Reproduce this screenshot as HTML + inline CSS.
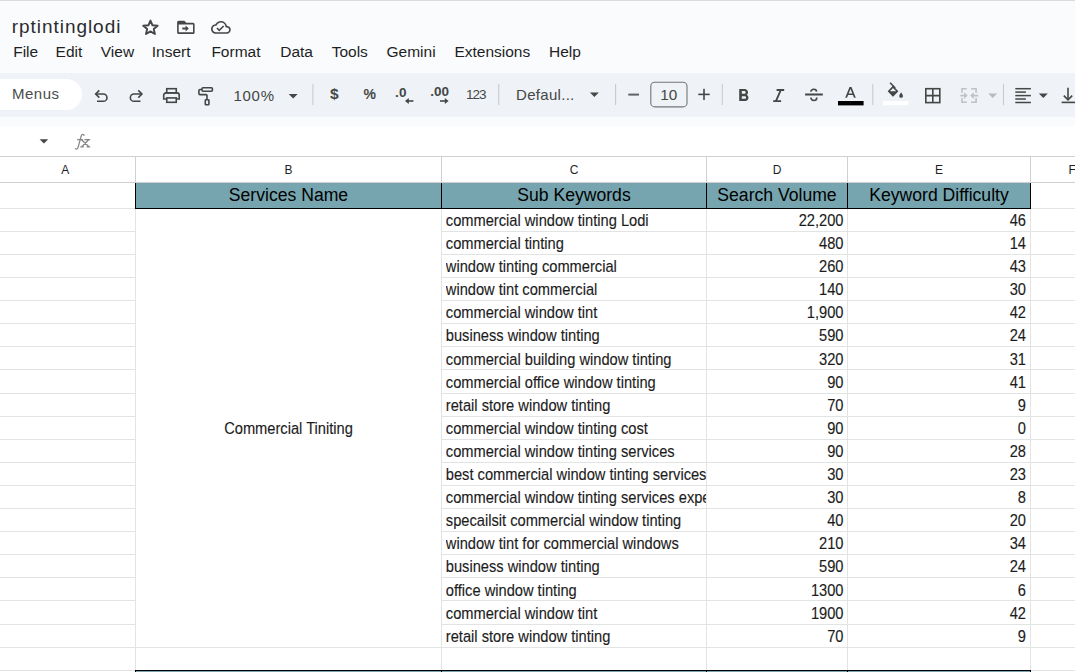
<!DOCTYPE html><html><head><meta charset='utf-8'><style>
*{margin:0;padding:0;box-sizing:border-box}
html,body{width:1075px;height:672px;overflow:hidden;background:#f9fbfd;font-family:"Liberation Sans",sans-serif;position:relative}
.a{position:absolute}
.t{position:absolute;white-space:nowrap}
.ico{position:absolute}
.dt{font-size:14.67px;line-height:18px;color:#1c1c1c;transform:scaleY(1.1);transform-origin:0 14px;-webkit-text-stroke:0.12px #1c1c1c}
</style></head><body>
<div class="a" style="left:0;top:0;width:1075px;height:1px;background:#dadcdb"></div>
<div class="t" style="left:11.8px;top:13.5px;font-size:19px;letter-spacing:0.95px;color:#2b2c2e;line-height:26px">rptintinglodi</div>
<div class="t" style="left:13.2px;top:43.1px;font-size:15.5px;color:#1f1f1f;line-height:18px">File</div>
<div class="t" style="left:55.6px;top:43.1px;font-size:15.5px;color:#1f1f1f;line-height:18px">Edit</div>
<div class="t" style="left:100.8px;top:43.1px;font-size:15.5px;color:#1f1f1f;line-height:18px">View</div>
<div class="t" style="left:151.8px;top:43.1px;font-size:15.5px;color:#1f1f1f;line-height:18px">Insert</div>
<div class="t" style="left:211.4px;top:43.1px;font-size:15.5px;color:#1f1f1f;line-height:18px">Format</div>
<div class="t" style="left:280.2px;top:43.1px;font-size:15.5px;color:#1f1f1f;line-height:18px">Data</div>
<div class="t" style="left:331.7px;top:43.1px;font-size:15.5px;color:#1f1f1f;line-height:18px">Tools</div>
<div class="t" style="left:386.5px;top:43.1px;font-size:15.5px;color:#1f1f1f;line-height:18px">Gemini</div>
<div class="t" style="left:454.4px;top:43.1px;font-size:15.5px;color:#1f1f1f;line-height:18px">Extensions</div>
<div class="t" style="left:549.0px;top:43.1px;font-size:15.5px;color:#1f1f1f;line-height:18px">Help</div>
<div class="a" style="left:0;top:72.5px;width:1075px;height:44.5px;background:#eff2f6"></div>
<div class="a" style="left:-30px;top:79px;width:112px;height:31px;background:#fff;border-radius:16px"></div>
<div class="t" style="left:12px;top:85.2px;font-size:15px;letter-spacing:0.5px;color:#4a4d4c;line-height:17px">Menus</div>
<div class="a" style="left:0;top:125.5px;width:1075px;height:31px;background:#fff"></div>
<div class="a" style="left:0;top:156px;width:1075px;height:516px;background:#fff"></div>
<div class="a" style="left:0;top:156px;width:1075px;height:1px;background:#d0d0d0"></div>
<div class="a" style="left:0;top:182px;width:1075px;height:1px;background:#d0d0d0"></div>
<div class="t" style="left:-5px;width:140.5px;text-align:center;top:162.7px;font-size:12px;line-height:14px;color:#1f1f1f">A</div>
<div class="t" style="left:135.5px;width:306.0px;text-align:center;top:162.7px;font-size:12px;line-height:14px;color:#1f1f1f">B</div>
<div class="a" style="left:135px;top:157px;width:1px;height:25px;background:#d0d0d0"></div>
<div class="t" style="left:441.5px;width:265.0px;text-align:center;top:162.7px;font-size:12px;line-height:14px;color:#1f1f1f">C</div>
<div class="a" style="left:441px;top:157px;width:1px;height:25px;background:#d0d0d0"></div>
<div class="t" style="left:706.5px;width:141.0px;text-align:center;top:162.7px;font-size:12px;line-height:14px;color:#1f1f1f">D</div>
<div class="a" style="left:706px;top:157px;width:1px;height:25px;background:#d0d0d0"></div>
<div class="t" style="left:847.5px;width:183.0px;text-align:center;top:162.7px;font-size:12px;line-height:14px;color:#1f1f1f">E</div>
<div class="a" style="left:847px;top:157px;width:1px;height:25px;background:#d0d0d0"></div>
<div class="t" style="left:1030.5px;width:83.5px;text-align:center;top:162.7px;font-size:12px;line-height:14px;color:#1f1f1f">F</div>
<div class="a" style="left:1030px;top:157px;width:1px;height:25px;background:#d0d0d0"></div>
<div class="a" style="left:0;top:208px;width:1075px;height:1px;background:#e2e3e3"></div>
<div class="a" style="left:0;top:231px;width:135px;height:1px;background:#e2e3e3"></div>
<div class="a" style="left:441px;top:231px;width:640px;height:1px;background:#e2e3e3"></div>
<div class="a" style="left:0;top:254px;width:135px;height:1px;background:#e2e3e3"></div>
<div class="a" style="left:441px;top:254px;width:640px;height:1px;background:#e2e3e3"></div>
<div class="a" style="left:0;top:277px;width:135px;height:1px;background:#e2e3e3"></div>
<div class="a" style="left:441px;top:277px;width:640px;height:1px;background:#e2e3e3"></div>
<div class="a" style="left:0;top:300px;width:135px;height:1px;background:#e2e3e3"></div>
<div class="a" style="left:441px;top:300px;width:640px;height:1px;background:#e2e3e3"></div>
<div class="a" style="left:0;top:323px;width:135px;height:1px;background:#e2e3e3"></div>
<div class="a" style="left:441px;top:323px;width:640px;height:1px;background:#e2e3e3"></div>
<div class="a" style="left:0;top:346px;width:135px;height:1px;background:#e2e3e3"></div>
<div class="a" style="left:441px;top:346px;width:640px;height:1px;background:#e2e3e3"></div>
<div class="a" style="left:0;top:369px;width:135px;height:1px;background:#e2e3e3"></div>
<div class="a" style="left:441px;top:369px;width:640px;height:1px;background:#e2e3e3"></div>
<div class="a" style="left:0;top:393px;width:135px;height:1px;background:#e2e3e3"></div>
<div class="a" style="left:441px;top:393px;width:640px;height:1px;background:#e2e3e3"></div>
<div class="a" style="left:0;top:416px;width:135px;height:1px;background:#e2e3e3"></div>
<div class="a" style="left:441px;top:416px;width:640px;height:1px;background:#e2e3e3"></div>
<div class="a" style="left:0;top:439px;width:135px;height:1px;background:#e2e3e3"></div>
<div class="a" style="left:441px;top:439px;width:640px;height:1px;background:#e2e3e3"></div>
<div class="a" style="left:0;top:462px;width:135px;height:1px;background:#e2e3e3"></div>
<div class="a" style="left:441px;top:462px;width:640px;height:1px;background:#e2e3e3"></div>
<div class="a" style="left:0;top:485px;width:135px;height:1px;background:#e2e3e3"></div>
<div class="a" style="left:441px;top:485px;width:640px;height:1px;background:#e2e3e3"></div>
<div class="a" style="left:0;top:508px;width:135px;height:1px;background:#e2e3e3"></div>
<div class="a" style="left:441px;top:508px;width:640px;height:1px;background:#e2e3e3"></div>
<div class="a" style="left:0;top:531px;width:135px;height:1px;background:#e2e3e3"></div>
<div class="a" style="left:441px;top:531px;width:640px;height:1px;background:#e2e3e3"></div>
<div class="a" style="left:0;top:554px;width:135px;height:1px;background:#e2e3e3"></div>
<div class="a" style="left:441px;top:554px;width:640px;height:1px;background:#e2e3e3"></div>
<div class="a" style="left:0;top:577px;width:135px;height:1px;background:#e2e3e3"></div>
<div class="a" style="left:441px;top:577px;width:640px;height:1px;background:#e2e3e3"></div>
<div class="a" style="left:0;top:600px;width:135px;height:1px;background:#e2e3e3"></div>
<div class="a" style="left:441px;top:600px;width:640px;height:1px;background:#e2e3e3"></div>
<div class="a" style="left:0;top:624px;width:135px;height:1px;background:#e2e3e3"></div>
<div class="a" style="left:441px;top:624px;width:640px;height:1px;background:#e2e3e3"></div>
<div class="a" style="left:0;top:647px;width:1075px;height:1px;background:#e2e3e3"></div>
<div class="a" style="left:0;top:670px;width:1075px;height:1px;background:#e2e3e3"></div>
<div class="a" style="left:135px;top:183px;width:1px;height:489px;background:#e2e3e3"></div>
<div class="a" style="left:441px;top:183px;width:1px;height:489px;background:#e2e3e3"></div>
<div class="a" style="left:706px;top:183px;width:1px;height:489px;background:#e2e3e3"></div>
<div class="a" style="left:847px;top:183px;width:1px;height:489px;background:#e2e3e3"></div>
<div class="a" style="left:1030px;top:183px;width:1px;height:489px;background:#e2e3e3"></div>
<div class="a" style="left:135px;top:183px;width:896px;height:25px;background:#76a5af"></div>
<div class="a" style="left:135px;top:208px;width:896px;height:1px;background:#000"></div>
<div class="a" style="left:135px;top:183px;width:1px;height:26px;background:#000"></div>
<div class="a" style="left:441px;top:183px;width:1px;height:26px;background:#000"></div>
<div class="a" style="left:706px;top:183px;width:1px;height:26px;background:#000"></div>
<div class="a" style="left:847px;top:183px;width:1px;height:26px;background:#000"></div>
<div class="a" style="left:1030px;top:183px;width:1px;height:26px;background:#000"></div>
<div class="t" style="left:135.5px;width:306.0px;text-align:center;top:185px;font-size:17.6px;line-height:20px;color:#000">Services Name</div>
<div class="t" style="left:441.5px;width:265.0px;text-align:center;top:185px;font-size:17.6px;line-height:20px;color:#000">Sub Keywords</div>
<div class="t" style="left:706.5px;width:141.0px;text-align:center;top:185px;font-size:17.6px;line-height:20px;color:#000">Search Volume</div>
<div class="t" style="left:847.5px;width:183.0px;text-align:center;top:185px;font-size:17.6px;line-height:20px;color:#000">Keyword Difficulty</div>
<div class="t dt" style="left:445.8px;width:260.5px;overflow:hidden;top:211.9px">commercial window tinting Lodi</div>
<div class="t dt" style="left:707px;width:136.5px;text-align:right;top:211.9px">22,200</div>
<div class="t dt" style="left:848px;width:178px;text-align:right;top:211.9px">46</div>
<div class="t dt" style="left:445.8px;width:260.5px;overflow:hidden;top:235.0px">commercial tinting</div>
<div class="t dt" style="left:707px;width:136.5px;text-align:right;top:235.0px">480</div>
<div class="t dt" style="left:848px;width:178px;text-align:right;top:235.0px">14</div>
<div class="t dt" style="left:445.8px;width:260.5px;overflow:hidden;top:258.1px">window tinting commercial</div>
<div class="t dt" style="left:707px;width:136.5px;text-align:right;top:258.1px">260</div>
<div class="t dt" style="left:848px;width:178px;text-align:right;top:258.1px">43</div>
<div class="t dt" style="left:445.8px;width:260.5px;overflow:hidden;top:281.2px">window tint commercial</div>
<div class="t dt" style="left:707px;width:136.5px;text-align:right;top:281.2px">140</div>
<div class="t dt" style="left:848px;width:178px;text-align:right;top:281.2px">30</div>
<div class="t dt" style="left:445.8px;width:260.5px;overflow:hidden;top:304.3px">commercial window tint</div>
<div class="t dt" style="left:707px;width:136.5px;text-align:right;top:304.3px">1,900</div>
<div class="t dt" style="left:848px;width:178px;text-align:right;top:304.3px">42</div>
<div class="t dt" style="left:445.8px;width:260.5px;overflow:hidden;top:327.4px">business window tinting</div>
<div class="t dt" style="left:707px;width:136.5px;text-align:right;top:327.4px">590</div>
<div class="t dt" style="left:848px;width:178px;text-align:right;top:327.4px">24</div>
<div class="t dt" style="left:445.8px;width:260.5px;overflow:hidden;top:350.5px">commercial building window tinting</div>
<div class="t dt" style="left:707px;width:136.5px;text-align:right;top:350.5px">320</div>
<div class="t dt" style="left:848px;width:178px;text-align:right;top:350.5px">31</div>
<div class="t dt" style="left:445.8px;width:260.5px;overflow:hidden;top:373.6px">commercial office window tinting</div>
<div class="t dt" style="left:707px;width:136.5px;text-align:right;top:373.6px">90</div>
<div class="t dt" style="left:848px;width:178px;text-align:right;top:373.6px">41</div>
<div class="t dt" style="left:445.8px;width:260.5px;overflow:hidden;top:396.7px">retail store window tinting</div>
<div class="t dt" style="left:707px;width:136.5px;text-align:right;top:396.7px">70</div>
<div class="t dt" style="left:848px;width:178px;text-align:right;top:396.7px">9</div>
<div class="t dt" style="left:445.8px;width:260.5px;overflow:hidden;top:419.8px">commercial window tinting cost</div>
<div class="t dt" style="left:707px;width:136.5px;text-align:right;top:419.8px">90</div>
<div class="t dt" style="left:848px;width:178px;text-align:right;top:419.8px">0</div>
<div class="t dt" style="left:445.8px;width:260.5px;overflow:hidden;top:442.9px">commercial window tinting services</div>
<div class="t dt" style="left:707px;width:136.5px;text-align:right;top:442.9px">90</div>
<div class="t dt" style="left:848px;width:178px;text-align:right;top:442.9px">28</div>
<div class="t dt" style="left:445.8px;width:260.5px;overflow:hidden;top:466.0px">best commercial window tinting services</div>
<div class="t dt" style="left:707px;width:136.5px;text-align:right;top:466.0px">30</div>
<div class="t dt" style="left:848px;width:178px;text-align:right;top:466.0px">23</div>
<div class="t dt" style="left:445.8px;width:260.5px;overflow:hidden;top:489.1px">commercial window tinting services expert</div>
<div class="t dt" style="left:707px;width:136.5px;text-align:right;top:489.1px">30</div>
<div class="t dt" style="left:848px;width:178px;text-align:right;top:489.1px">8</div>
<div class="t dt" style="left:445.8px;width:260.5px;overflow:hidden;top:512.2px">specailsit commercial window tinting</div>
<div class="t dt" style="left:707px;width:136.5px;text-align:right;top:512.2px">40</div>
<div class="t dt" style="left:848px;width:178px;text-align:right;top:512.2px">20</div>
<div class="t dt" style="left:445.8px;width:260.5px;overflow:hidden;top:535.3px">window tint for commercial windows</div>
<div class="t dt" style="left:707px;width:136.5px;text-align:right;top:535.3px">210</div>
<div class="t dt" style="left:848px;width:178px;text-align:right;top:535.3px">34</div>
<div class="t dt" style="left:445.8px;width:260.5px;overflow:hidden;top:558.4px">business window tinting</div>
<div class="t dt" style="left:707px;width:136.5px;text-align:right;top:558.4px">590</div>
<div class="t dt" style="left:848px;width:178px;text-align:right;top:558.4px">24</div>
<div class="t dt" style="left:445.8px;width:260.5px;overflow:hidden;top:581.5px">office window tinting</div>
<div class="t dt" style="left:707px;width:136.5px;text-align:right;top:581.5px">1300</div>
<div class="t dt" style="left:848px;width:178px;text-align:right;top:581.5px">6</div>
<div class="t dt" style="left:445.8px;width:260.5px;overflow:hidden;top:604.6px">commercial window tint</div>
<div class="t dt" style="left:707px;width:136.5px;text-align:right;top:604.6px">1900</div>
<div class="t dt" style="left:848px;width:178px;text-align:right;top:604.6px">42</div>
<div class="t dt" style="left:445.8px;width:260.5px;overflow:hidden;top:627.7px">retail store window tinting</div>
<div class="t dt" style="left:707px;width:136.5px;text-align:right;top:627.7px">70</div>
<div class="t dt" style="left:848px;width:178px;text-align:right;top:627.7px">9</div>
<div class="t dt" style="left:135.5px;width:306px;text-align:center;top:420.2px">Commercial Tiniting</div>
<div class="a" style="left:135px;top:671px;width:896px;height:10px;background:#76a5af"></div>
<div class="a" style="left:135px;top:670px;width:896px;height:1px;background:#000"></div>
<div class="a" style="left:135px;top:670px;width:1px;height:10px;background:#000"></div>
<div class="a" style="left:441px;top:670px;width:1px;height:10px;background:#000"></div>
<div class="a" style="left:706px;top:670px;width:1px;height:10px;background:#000"></div>
<div class="a" style="left:847px;top:670px;width:1px;height:10px;background:#000"></div>
<div class="a" style="left:1030px;top:670px;width:1px;height:10px;background:#000"></div>
<div class="t" style="left:233.5px;top:87.2px;font-size:15px;letter-spacing:0.7px;color:#444746;line-height:18px">100%</div>
<div class="t" style="left:330px;top:84.5px;font-size:15.5px;font-weight:bold;color:#444746;line-height:18px">$</div>
<div class="t" style="left:363.5px;top:85.5px;font-size:14px;color:#444746;line-height:16px;font-weight:bold">%</div>
<div class="t" style="left:395px;top:84.5px;font-size:13.5px;font-weight:bold;color:#444746;line-height:16px;letter-spacing:0.3px">.0</div>
<div class="t" style="left:430.3px;top:84px;font-size:13.5px;font-weight:bold;color:#444746;line-height:16px;letter-spacing:0px">.00</div>
<div class="t" style="left:466px;top:86.5px;font-size:13.5px;color:#444746;line-height:16px;letter-spacing:-1px">123</div>
<div class="t" style="left:516px;top:85.5px;font-size:15px;letter-spacing:0.3px;color:#444746;line-height:18px">Defaul...</div>
<div class="t" style="left:660.3px;top:86px;font-size:15.3px;color:#444746;line-height:18px">10</div>
<svg class="a" style="left:0;top:0" width="1075" height="672" viewBox="0 0 1075 672"><path fill="none" stroke="#444746" stroke-width="1.9" stroke-linejoin="round" d="M150.45 20.55 L152.47 25.25 L157.65 25.69 L153.73 29.05 L154.90 34.04 L150.45 31.39 L146.00 34.04 L147.18 29.05 L143.25 25.69 L148.43 25.26Z"/>
<path fill="#444746" fill-rule="evenodd" d="M177.1 22.3Q177.1 20.8 178.6 20.8H184.3L186.3 22.8H193.1Q194.6 22.8 194.6 24.3V32.4Q194.6 33.9 193.1 33.9H178.6Q177.1 33.9 177.1 32.4ZM178.7 24.6V32.3H193V24.6Z"/>
<path fill="#444746" d="M182.3 27.5H185.6V25.5L188.8 28.5L185.6 31.5V29.5H182.3Z"/>
<g transform="translate(211,17.8) scale(0.825,0.8)"><path fill="#444746" d="M19.35 10.04C18.67 6.59 15.64 4 12 4 9.11 4 6.6 5.64 5.35 8.04 2.34 8.36 0 10.91 0 14c0 3.31 2.69 6 6 6h13c2.76 0 5-2.24 5-5 0-2.640-2.05-4.78-4.65-4.96zM19 18H6c-2.21 0-4-1.79-4-4 0-2.05 1.53-3.760 3.56-3.97l1.07-.11.5-.95C8.080 7.14 9.94 6 12 6c2.62 0 4.88 1.86 5.39 4.43l.3 1.5 1.53.11c1.56.1 2.78 1.41 2.78 2.96 0 1.65-1.35 3-3 3zm-9-3.82l-2.09-2.09L6.5 13.5 10 17l6.01-6.01-1.41-1.41z"/></g>
<path fill="none" stroke="#444746" stroke-width="1.6" d="M97 101.3H103.3A3.65 3.65 0 0 0 103.3 94H95.6"/>
<path fill="none" stroke="#444746" stroke-width="1.6" d="M99.3 90.4L95.7 94L99.3 97.6"/>
<path fill="none" stroke="#444746" stroke-width="1.6" d="M140.5 101.3H134A3.65 3.65 0 0 1 134 94H141.9"/>
<path fill="none" stroke="#444746" stroke-width="1.6" d="M138.3 90.4L141.9 94L138.3 97.6"/>
<rect fill="none" stroke="#444746" stroke-width="1.6" x="166.75" y="88.7" width="9.5" height="4.1"/>
<path fill="none" stroke="#444746" stroke-width="1.6" d="M166.75 99H163.7V95.2A2.3 2.3 0 0 1 166 92.9H177A2.3 2.3 0 0 1 179.2 95.2V99H176.25"/>
<rect fill="none" stroke="#444746" stroke-width="1.6" x="166.75" y="97.9" width="9.5" height="4.4"/>
<rect fill="none" stroke="#444746" stroke-width="1.6" x="202" y="87.8" width="10.4" height="3.4" rx="1"/>
<path fill="none" stroke="#444746" stroke-width="1.6" d="M202 89.5H200A1.1 1.1 0 0 0 198.9 90.6V93.5A1.1 1.1 0 0 0 200 94.6H205.9A1.1 1.1 0 0 1 207 95.7V99.5"/>
<rect fill="none" stroke="#444746" stroke-width="1.6" x="205.3" y="99.8" width="3.6" height="5" rx="0.6"/>
<path fill="#444746" d="M288.7 94h9l-4.5 4.5z"/>
<path fill="#444746" d="M589.9 92.4h9l-4.5 4.5z"/>
<path fill="#b9babb" d="M988.2 93.4h9l-4.5 4.5z"/>
<path fill="#444746" d="M1038.8 93.4h9l-4.5 4.5z"/>
<rect x="312.4" y="84" width="1" height="21" fill="#c7c7c7"/>
<rect x="498.3" y="84" width="1" height="21" fill="#c7c7c7"/>
<rect x="615.1" y="84" width="1" height="21" fill="#c7c7c7"/>
<rect x="721.8" y="84" width="1" height="21" fill="#c7c7c7"/>
<rect x="872.3" y="84" width="1" height="21" fill="#c7c7c7"/>
<rect x="1003.0" y="84" width="1" height="21" fill="#c7c7c7"/>
<path fill="none" stroke="#444746" stroke-width="1.6" stroke-width="1.7" d="M413.4 101H406.3"/><path fill="#444746" d="M405 101L408.8 97.9V104.1Z"/>
<path fill="none" stroke="#444746" stroke-width="1.6" stroke-width="1.7" d="M440 101H447"/><path fill="#444746" d="M448.6 101L444.8 97.9V104.1Z"/>
<rect x="628.3" y="93.6" width="10.7" height="2" fill="#5f6368"/>
<rect x="698.3" y="93.6" width="11.4" height="1.6" fill="#444746"/><rect x="703.2" y="88.8" width="1.6" height="11.2" fill="#444746"/>
<rect x="650.8" y="82.3" width="36.2" height="24.6" rx="4" fill="none" stroke="#747775" stroke-width="1.1"/>
<g transform="translate(733.2,85.5) scale(0.86)"><path fill="#444746" d="M15.6 10.79c.97-.67 1.65-1.77 1.65-2.79 0-2.260-1.75-4-4-4H7v14h7.04c2.09 0 3.71-1.7 3.71-3.79 0-1.52-.86-2.82-2.15-3.42zM10 6.5h3c.83 0 1.5.67 1.5 1.5s-.67 1.5-1.5 1.5h-3v-3zm3.5 9H10v-3h3.5c.83 0 1.5.67 1.5 1.5s-.67 1.5-1.5 1.5z"/></g>
<path fill="#444746" d="M776.6 89.1H784.2V91H781.4L777.3 100.2H781.1V102.1H773.2V100.2H775.3L779.4 91H776.6Z"/>
<rect x="805.1" y="93.5" width="17.7" height="2" fill="#444746"/>
<path fill="none" stroke="#444746" stroke-width="1.6" d="M810.9 91.8A2.8 2.4 0 0 1 816.6 91.6"/>
<path fill="none" stroke="#444746" stroke-width="1.6" d="M810.9 97.5A2.9 3 0 0 0 816.8 97.5"/>
<path fill="#444746" d="M849.5 87.1H851.5L855.8 97.8H854L852.9 95H848.1L847 97.8H845.2ZM848.7 93.4H852.3L850.5 88.9Z"/>
<rect x="838" y="101" width="25.6" height="4.4" fill="#000"/>
<path fill="#444746" d="M888.6 91.2L893 86.8L897.4 91.2Z" fill-opacity="0"/>
<path fill="none" stroke="#444746" stroke-width="1.6" d="M893 86.9L888.8 91.2L893 95.6L897.3 91.2Z"/>
<path fill="#444746" d="M888.3 91.2H897.7L893 96.3Z"/>
<path fill="none" stroke="#444746" stroke-width="1.6" d="M890.1 82.8L895.2 88"/>
<path fill="#444746" d="M901.1 92.4C901.1 92.4 899.2 94.6 899.2 95.9A1.9 1.9 0 0 0 903 95.9C903 94.6 901.1 92.4 901.1 92.4Z"/>
<rect x="883" y="101" width="25.4" height="4.2" fill="#fff"/>
<rect fill="none" stroke="#444746" stroke-width="1.6" x="925.8" y="88.7" width="14" height="13.9"/>
<path fill="none" stroke="#444746" stroke-width="1.6" d="M932.8 88.7V102.6M925.8 95.65H939.8"/>
<path fill="none" stroke="#bfc1c3" stroke-width="1.6" d="M966.8 88.8H962V92.8M962 98.1V102.3H966.8M971.2 88.8H976.1V92.8M976.1 98.1V102.3H971.2"/>
<path fill="none" stroke="#bfc1c3" stroke-width="1.6" d="M960.3 95.6H965.5M973.2 95.6H978.2"/>
<path fill="#bfc1c3" d="M967.6 95.6L964.2 92.2V99Z M970.3 95.6L973.7 92.2V99Z"/>
<rect x="1015.3" y="87.95" width="15.600000000000136" height="1.5" fill="#444746"/>
<rect x="1015.3" y="91.35" width="10.600000000000136" height="1.5" fill="#444746"/>
<rect x="1015.3" y="94.85" width="15.600000000000136" height="1.5" fill="#444746"/>
<rect x="1015.3" y="98.25" width="10.600000000000136" height="1.5" fill="#444746"/>
<rect x="1015.3" y="101.75" width="15.600000000000136" height="1.5" fill="#444746"/>
<path fill="none" stroke="#444746" stroke-width="1.6" d="M1068 87.8V99.5"/><path fill="none" stroke="#444746" stroke-width="1.6" d="M1063.8 95.6L1068 99.8L1072.2 95.6"/>
<rect x="1061.6" y="101.6" width="14" height="1.6" fill="#444746"/>
<path fill="none" stroke="#858789" stroke-width="1.3" d="M84.2 135.8C83.9 134.2 81.9 133.9 81.3 135.6L78 147.6C77.5 149.4 75.9 149.6 75.3 148.2"/>
<path fill="none" stroke="#858789" stroke-width="1.3" d="M77.2 139.6H83M84.5 139.6H90.2M81.6 139.8L88.9 146.7M88.6 139.8L81.9 146.7M80.3 146.9H83.8M86.6 146.9H90.2"/>
<path fill="#444746" d="M39.6 139.3h8.6l-4.3 4.3z"/></svg>
</body></html>
